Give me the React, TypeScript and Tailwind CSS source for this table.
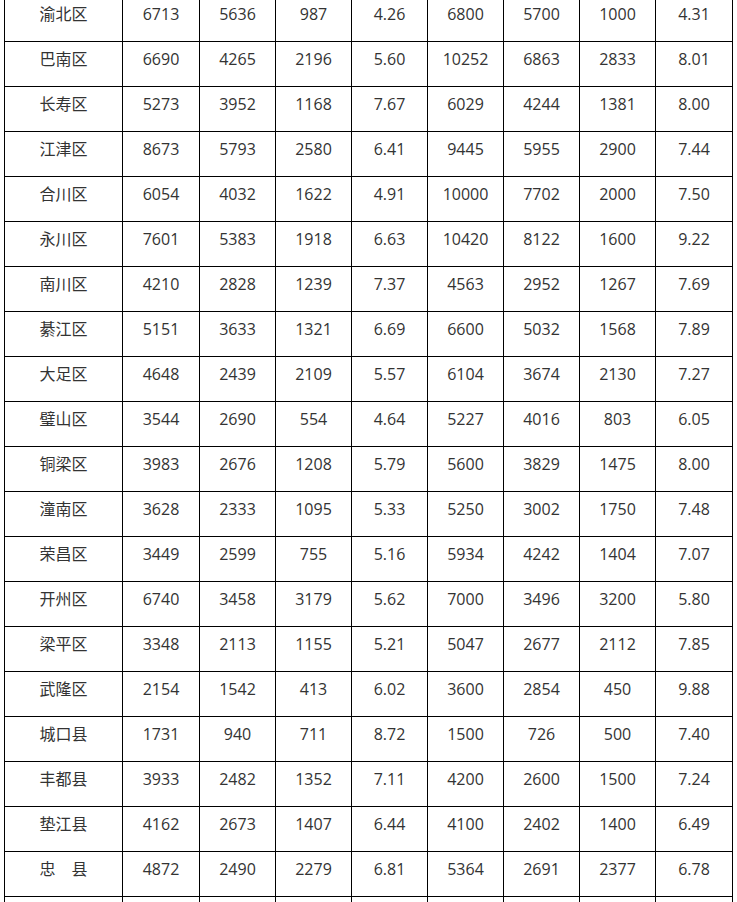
const rows: string[][] = [
  ['渝北区', '6713', '5636', '987', '4.26', '6800', '5700', '1000', '4.31'],
  ['巴南区', '6690', '4265', '2196', '5.60', '10252', '6863', '2833', '8.01'],
  ['长寿区', '5273', '3952', '1168', '7.67', '6029', '4244', '1381', '8.00'],
  ['江津区', '8673', '5793', '2580', '6.41', '9445', '5955', '2900', '7.44'],
  ['合川区', '6054', '4032', '1622', '4.91', '10000', '7702', '2000', '7.50'],
  ['永川区', '7601', '5383', '1918', '6.63', '10420', '8122', '1600', '9.22'],
  ['南川区', '4210', '2828', '1239', '7.37', '4563', '2952', '1267', '7.69'],
  ['綦江区', '5151', '3633', '1321', '6.69', '6600', '5032', '1568', '7.89'],
  ['大足区', '4648', '2439', '2109', '5.57', '6104', '3674', '2130', '7.27'],
  ['璧山区', '3544', '2690', '554', '4.64', '5227', '4016', '803', '6.05'],
  ['铜梁区', '3983', '2676', '1208', '5.79', '5600', '3829', '1475', '8.00'],
  ['潼南区', '3628', '2333', '1095', '5.33', '5250', '3002', '1750', '7.48'],
  ['荣昌区', '3449', '2599', '755', '5.16', '5934', '4242', '1404', '7.07'],
  ['开州区', '6740', '3458', '3179', '5.62', '7000', '3496', '3200', '5.80'],
  ['梁平区', '3348', '2113', '1155', '5.21', '5047', '2677', '2112', '7.85'],
  ['武隆区', '2154', '1542', '413', '6.02', '3600', '2854', '450', '9.88'],
  ['城口县', '1731', '940', '711', '8.72', '1500', '726', '500', '7.40'],
  ['丰都县', '3933', '2482', '1352', '7.11', '4200', '2600', '1500', '7.24'],
  ['垫江县', '4162', '2673', '1407', '6.44', '4100', '2402', '1400', '6.49'],
  ['忠\u3000县', '4872', '2490', '2279', '6.81', '5364', '2691', '2377', '6.78'],
  ['', '', '', '', '', '', '', '', ''],
];

const widths = ['w-[118px]', 'w-[77px]', 'w-[76px]', 'w-[76px]', 'w-[76px]', 'w-[76px]', 'w-[76px]', 'w-[76px]', 'w-[77px]'];

export default function App() {
  return (
    <div className="h-[902px] w-[737px] overflow-hidden bg-white">
      <table
        className="ml-[4px] -mt-[4px] w-[728px] table-fixed border-collapse text-[16px] text-[#333]"
        style={{ fontFamily: '"Open Sans", "Noto Sans CJK SC", sans-serif' }}
      >
        <colgroup>
          {widths.map((w, i) => (
            <col key={i} className={w} />
          ))}
        </colgroup>
        <tbody>
          {rows.map((r, i) => (
            <tr key={i}>
              {r.map((c, j) => (
                <td key={j} className="border border-black p-0 text-center align-top">
                  <div className="h-[44px] pt-[5px] leading-[24px] whitespace-pre">{c}</div>
                </td>
              ))}
            </tr>
          ))}
        </tbody>
      </table>
    </div>
  );
}
